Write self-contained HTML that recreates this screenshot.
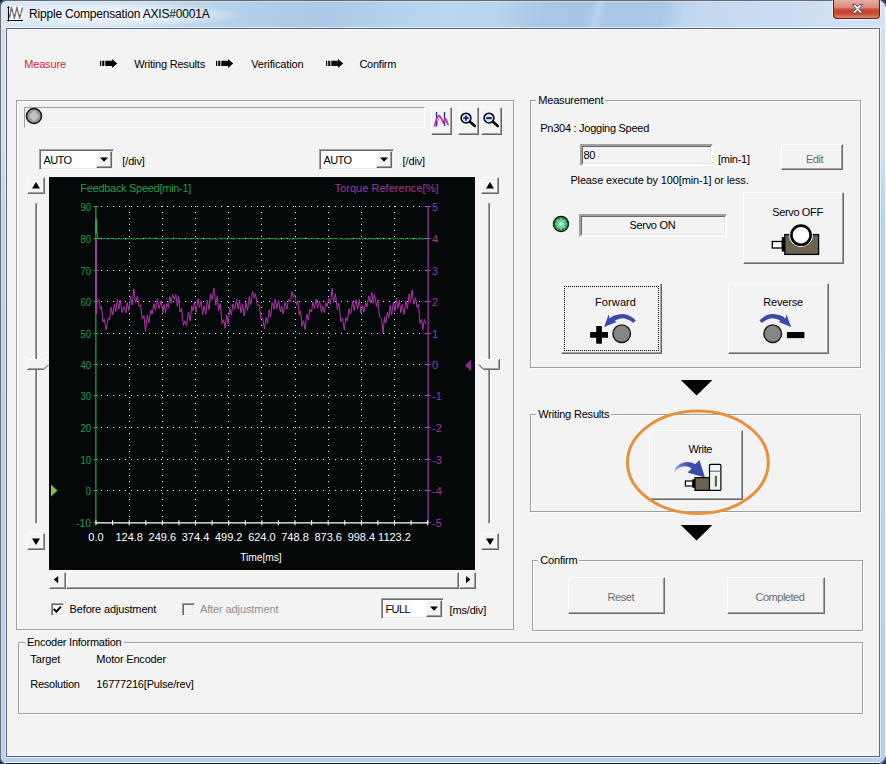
<!DOCTYPE html>
<html lang="en"><head><meta charset="utf-8"><title>Ripple Compensation AXIS#0001A</title>
<style>
html,body{margin:0;padding:0}
body{width:886px;height:764px;overflow:hidden;position:relative;background:#b4cfea;font-family:"Liberation Sans",Arial,sans-serif;font-size:11px}
*{box-sizing:border-box}
.abs,.t,.btn,.sunk,.grp,.gl,svg{position:absolute}
.t{white-space:pre;display:block}
.btn{background:#f3f3f3;border-top:1px solid #fff;border-left:1px solid #fff;border-right:1px solid #696969;border-bottom:1px solid #696969;box-shadow:inset -1px -1px 0 #a0a0a0}
.sunk{border-top:1px solid #a0a0a0;border-left:1px solid #a0a0a0;border-right:1px solid #fff;border-bottom:1px solid #fff;box-shadow:inset 1px 1px 0 #696969, inset -1px -1px 0 #e3e3e3}
.sunk1{box-shadow:none}
.sunk3{box-shadow:inset 1px 1px 0 #a0a0a0, inset -1px -1px 0 #fff, inset 2px 2px 0 #696969, inset -2px -2px 0 #e3e3e3}
.grp{border:1px solid #a0a0a0;box-shadow:1px 1px 0 #fff}
.grp i{position:absolute;left:0;top:0;right:-0px;bottom:0;border-top:1px solid #fff;border-left:1px solid #fff;display:block}
.gl{background:#f3f3f3}
#frame{left:0;top:0;width:886px;height:764px;background:linear-gradient(180deg,#cfe1f3 0px,#cde0f2 150px,#b8d4ed 215px,#b5d1eb 764px)}
#tbar{left:0;top:0;width:886px;height:29px;background:linear-gradient(105deg,#dbe8f5 0%,#d0e1f2 13.500%,#b5d0ea 26%,#adc9e7 37%,#b5d2ec 45%,#bad5ee 50%,#b8d3ec 56%,#a9c6e5 61.500%,#a8c5e4 66.300%,#b9d3ec 67.200%,#a9c6e5 68.200%,#abc8e6 74.500%,#bfd7ee 77%,#c9ddf1 86%,#d3e3f3 100%)}
#client{left:6px;top:28px;width:874px;height:729px;background:#f3f3f3;border:1px solid #5d6a7c}
</style></head><body>

<div class="abs" id="frame"></div>
<div class="abs" id="tbar"></div>
<div class="abs" style="left:10px;top:3px;width:230px;height:24px;background:radial-gradient(ellipse at 45% 50%,rgba(255,255,255,.75) 0%,rgba(255,255,255,.45) 45%,rgba(255,255,255,0) 75%)"></div>
<div class="abs" style="left:0;top:0;width:886px;height:1px;background:#6b6a6f"></div>
<div class="abs" style="left:0;top:1px;width:886px;height:1px;background:rgba(225,240,255,.45)"></div>
<div class="abs" style="left:0;top:0;width:1px;height:764px;background:#6f6e72"></div>
<div class="abs" style="left:1px;top:1px;width:1px;height:762px;background:rgba(215,238,255,.4)"></div>
<div class="abs" style="left:0;top:763px;width:886px;height:1px;background:#121925"></div>
<div class="abs" style="left:2px;top:762px;width:884px;height:1px;background:#f0f7fd"></div>
<div class="abs" style="left:885px;top:2px;width:1px;height:760px;background:#f0f7fd"></div>
<div class="abs" style="left:5px;top:27px;width:876px;height:731px;border:1px solid rgba(255,255,255,.55)"></div>
<div class="abs" id="client"></div>
<svg width="886" height="764" viewBox="0 0 886 764" style="left:0;top:0;pointer-events:none"><path d="M0 0h5L0 5zM886 0h-5l5 5zM0 764v-5l5 5zM886 764v-6l-6 6z" fill="#1a2740"/><path d="M0 6.500Q.8 .8 6.500 0M0 757.500Q.8 763.200 6.500 764" fill="none" stroke="#5f6878" stroke-width="1.600"/><path d="M879.500 0Q885.200 .8 886 6.500M886 757Q885 763 879 764" fill="none" stroke="#5f6878" stroke-width="1.600"/></svg>
<div class="abs" style="left:833px;top:0;width:47px;height:19px;border:1px solid #5a1f17;border-top:none;border-radius:0 0 4px 4px;background:linear-gradient(180deg,#e9aea4 0px,#e19a8e 4px,#dc8577 8px,#c94d36 9px,#c8452c 13px,#d76a55 16px,#e59483 19px);box-shadow:0 0 0 1px rgba(255,255,255,.5)">
<svg width="46" height="18" viewBox="0 0 46 18" style="left:-0.500px;top:0"><path d="M18.5 4.5h3.2l1.9 2.4 1.9-2.4h3.2l-3.5 4.2 3.7 4.4h-3.3l-2-2.6-2 2.6h-3.3l3.7-4.4z" fill="#fff" stroke="#4a5466" stroke-width="1" stroke-linejoin="round"/></svg></div>
<svg width="18" height="18" viewBox="-1 -1 18 18" style="left:6px;top:5px">
<rect x="0" y="0" width="16.200" height="16.200" fill="#fff"/>
<path d="M2.500 12.200L4.400 1.200L7.400 12.400L9.900 1.200L12.700 12.400L15.500 1.200" fill="none" stroke="#7e7e7e" stroke-width="1.500" stroke-linejoin="round"/>
<g fill="#4646c8"><rect x="2" y="8.700" width="1.100" height="1.200"/><rect x="4.200" y="3.800" width="1.400" height="1.100"/><rect x="6.900" y="8.800" width="1.200" height="1.200"/><rect x="9.300" y="3.800" width="1.400" height="1.100"/><rect x="12.200" y="8.800" width="1.400" height="1.200"/></g>
<g fill="#e8e04a"><rect x="2.100" y="7" width=".8" height="1"/><rect x="5.200" y="6" width=".8" height="1"/><rect x="8.100" y="4" width=".8" height="1"/><rect x="13" y="7" width=".8" height="1"/></g>
<rect x="14.900" y="2.600" width="1.200" height="1.800" fill="#5aa0e0"/>
<path d="M1.400 .8V15.600M.2 14.500H15" fill="none" stroke="#000" stroke-width="1.100"/>
<path d="M0 1.800L1.400 -.1L2.800 1.800zM14.400 13.200L16.300 14.500L14.400 15.800z" fill="#000"/>
</svg>
<span class="t " style="left:29.00px;top:6.44px;font-size:12px;line-height:16px;color:#000;letter-spacing:-0.188px;">Ripple Compensation AXIS#0001A</span>
<span class="t " style="left:24.20px;top:57.19px;font-size:11px;line-height:14px;color:#e0242c;letter-spacing:-0.157px;">Measure</span>
<span class="t " style="left:134.20px;top:57.19px;font-size:11px;line-height:14px;color:#000;letter-spacing:-0.198px;">Writing Results</span>
<span class="t " style="left:251.20px;top:57.19px;font-size:11px;line-height:14px;color:#000;letter-spacing:-0.126px;">Verification</span>
<span class="t " style="left:359.40px;top:57.19px;font-size:11px;line-height:14px;color:#000;letter-spacing:-0.244px;">Confirm</span>
<svg width="19" height="12" viewBox="0 0 19 12" style="left:99.8px;top:58px"><path d="M0 2.800h1.200v5.200h-1.200zM2.200 2.800h2.100v5.200h-2.100zM5.300 2.800h6.800v-1.900l5.100 4.500-5.100 4.500v-1.900h-6.800z" fill="#050505"/></svg>
<svg width="19" height="12" viewBox="0 0 19 12" style="left:215.6px;top:58px"><path d="M0 2.800h1.200v5.200h-1.200zM2.200 2.800h2.100v5.200h-2.100zM5.300 2.800h6.800v-1.900l5.100 4.500-5.100 4.500v-1.900h-6.800z" fill="#050505"/></svg>
<svg width="19" height="12" viewBox="0 0 19 12" style="left:325.6px;top:58px"><path d="M0 2.800h1.200v5.200h-1.200zM2.200 2.800h2.100v5.200h-2.100zM5.300 2.800h6.800v-1.900l5.100 4.500-5.100 4.500v-1.900h-6.800z" fill="#050505"/></svg>
<div class="grp" style="left:16px;top:100px;width:498px;height:530px"><i></i></div>
<div class="sunk sunk1" style="left:24px;top:107px;width:401px;height:21px;background:#f3f3f3"></div>
<svg width="18" height="18" viewBox="0 0 18 18" style="left:25px;top:107px"><circle cx="9" cy="9" r="7.500" fill="#9c9c9c" stroke="#111" stroke-width="1.500"/><path d="M9 3.800L14.200 9 9 14.200 3.800 9z" fill="#c4c4c4"/></svg>
<div class="btn " style="left:431px;top:107px;width:21px;height:28px"><svg width="19" height="26" viewBox="0 0 19 26" style="left:0;top:0"><path d="M3.300 18.600L4.500 14l1.200-3.500L7.200 7.600l1.400 1.200 1.400 3 1.500 3.300 1-2.700 1.100-1.700 1.200 2.800 1 3.400" stroke="#9a9a9a" stroke-width="1" fill="none" transform="translate(.9 .6)"/><path d="M4.500 4V18.500M12.500 4V18" stroke="#2b2b8f" stroke-width="1.300" fill="none"/><path d="M2.300 18.500L3.500 14.200l1.300-3.600L6.800 7.400l1.500 1.300 1.400 3 1.600 3.300 1-2.800 1.200-1.700 1.200 2.800 1 3.400" stroke="#c3379f" stroke-width="1.600" fill="none" stroke-linejoin="round"/></svg></div>
<div class="btn " style="left:458px;top:107px;width:21px;height:28px"><svg width="19" height="26" viewBox="0 0 19 26" style="left:0;top:0"><circle cx="7" cy="10.100" r="4.900" fill="#cfe9ef" stroke="#000" stroke-width="1.500"/><path d="M4.300 10.100h5.400M7 7.400v5.400" stroke="#1c1c8c" stroke-width="1.800"/><path d="M10.900 13.800l4.900 4.200" stroke="#000" stroke-width="2.600" stroke-linecap="round"/></svg></div>
<div class="btn " style="left:481px;top:107px;width:21px;height:28px"><svg width="19" height="26" viewBox="0 0 19 26" style="left:0;top:0"><circle cx="7" cy="10.100" r="4.900" fill="#cfe9ef" stroke="#000" stroke-width="1.500"/><path d="M4.200 10.100h5.600" stroke="#1c1c8c" stroke-width="2"/><path d="M10.900 13.800l4.900 4.200" stroke="#000" stroke-width="2.600" stroke-linecap="round"/></svg></div>
<div class="sunk " style="left:39px;top:149px;width:75px;height:21px;background:#fff"></div>
<span class="t " style="left:43.50px;top:153.19px;font-size:11px;line-height:14px;color:#000;letter-spacing:-0.615px;">AUTO</span>
<div class="btn " style="left:96px;top:151px;width:16px;height:17px"><svg width="14" height="15" viewBox="0 0 14 15" style="left:0;top:0"><path d="M3 5.500h8l-4 4.300z" fill="#000"/></svg></div>
<span class="t " style="left:122.30px;top:154.39px;font-size:11px;line-height:14px;color:#000;letter-spacing:-0.138px;">[/div]</span>
<div class="sunk " style="left:319px;top:149px;width:75px;height:21px;background:#fff"></div>
<span class="t " style="left:323.50px;top:153.19px;font-size:11px;line-height:14px;color:#000;letter-spacing:-0.615px;">AUTO</span>
<div class="btn " style="left:376px;top:151px;width:16px;height:17px"><svg width="14" height="15" viewBox="0 0 14 15" style="left:0;top:0"><path d="M3 5.500h8l-4 4.300z" fill="#000"/></svg></div>
<span class="t " style="left:402.60px;top:154.39px;font-size:11px;line-height:14px;color:#000;letter-spacing:-0.138px;">[/div]</span>
<div class="btn " style="left:27px;top:177px;width:18px;height:17px"><svg width="16" height="15" viewBox="0 0 16 15" style="left:0;top:0"><path d="M4 10.500h8l-4-6.500z" fill="#000"/></svg></div>
<div class="btn " style="left:27px;top:533px;width:18px;height:17px"><svg width="16" height="15" viewBox="0 0 16 15" style="left:0;top:0"><path d="M4 4.500h8l-4 6.500z" fill="#000"/></svg></div>
<div class="abs" style="left:35px;top:203px;width:3px;height:321px;border-left:1px solid #a0a0a0;border-top:1px solid #a0a0a0;border-right:1px solid #fff;border-bottom:1px solid #fff;background:#696969"></div>
<div class="btn " style="left:481px;top:177px;width:18px;height:17px"><svg width="16" height="15" viewBox="0 0 16 15" style="left:0;top:0"><path d="M4 10.500h8l-4-6.500z" fill="#000"/></svg></div>
<div class="btn " style="left:481px;top:533px;width:18px;height:17px"><svg width="16" height="15" viewBox="0 0 16 15" style="left:0;top:0"><path d="M4 4.500h8l-4 6.500z" fill="#000"/></svg></div>
<div class="abs" style="left:488px;top:203px;width:3px;height:321px;border-left:1px solid #a0a0a0;border-top:1px solid #a0a0a0;border-right:1px solid #fff;border-bottom:1px solid #fff;background:#696969"></div>
<svg width="24" height="12" viewBox="0 0 24 12" style="left:27px;top:359px"><path d="M0 0h17l5 5.500-5 5.500h-17z" fill="#f3f3f3"/><path d="M.5 10.500V.5h16.500l5 5" fill="none" stroke="#fff"/><path d="M22 5.500l-5 5h-17" fill="none" stroke="#696969"/><path d="M20.800 5.700l-4.200 3.800h-15.600" fill="none" stroke="#a0a0a0"/></svg>
<svg width="24" height="12" viewBox="0 0 24 12" style="left:477px;top:359px"><path d="M23 0h-17l-5 5.500 5 5.500h17z" fill="#f3f3f3"/><path d="M1.300 5.500l5-5h16.200" fill="none" stroke="#fff"/><path d="M1.300 5.500l5 5h16.200v-10.500" fill="none" stroke="#696969"/><path d="M2.800 5.800l3.900 3.700h14.800v-8.500" fill="none" stroke="#a0a0a0"/></svg>
<svg width="426" height="393" viewBox="49 177 426 393" style="left:49px;top:177px;font-family:'Liberation Sans',Arial,sans-serif" shape-rendering="auto"><rect x="49" y="177" width="426" height="393" fill="#050808"/><path d="M101 206h1v1h-1zM107 206h1v1h-1zM113 206h1v1h-1zM119 206h1v1h-1zM125 206h1v1h-1zM131 206h1v1h-1zM137 206h1v1h-1zM143 206h1v1h-1zM149 206h1v1h-1zM155 206h1v1h-1zM161 206h1v1h-1zM167 206h1v1h-1zM173 206h1v1h-1zM179 206h1v1h-1zM185 206h1v1h-1zM191 206h1v1h-1zM197 206h1v1h-1zM203 206h1v1h-1zM209 206h1v1h-1zM215 206h1v1h-1zM221 206h1v1h-1zM227 206h1v1h-1zM233 206h1v1h-1zM239 206h1v1h-1zM245 206h1v1h-1zM251 206h1v1h-1zM257 206h1v1h-1zM263 206h1v1h-1zM269 206h1v1h-1zM275 206h1v1h-1zM281 206h1v1h-1zM287 206h1v1h-1zM293 206h1v1h-1zM299 206h1v1h-1zM305 206h1v1h-1zM311 206h1v1h-1zM317 206h1v1h-1zM323 206h1v1h-1zM329 206h1v1h-1zM335 206h1v1h-1zM341 206h1v1h-1zM347 206h1v1h-1zM353 206h1v1h-1zM359 206h1v1h-1zM365 206h1v1h-1zM371 206h1v1h-1zM377 206h1v1h-1zM383 206h1v1h-1zM389 206h1v1h-1zM395 206h1v1h-1zM401 206h1v1h-1zM407 206h1v1h-1zM413 206h1v1h-1zM419 206h1v1h-1zM425 206h1v1h-1zM101 238h1v1h-1zM107 238h1v1h-1zM113 238h1v1h-1zM119 238h1v1h-1zM125 238h1v1h-1zM131 238h1v1h-1zM137 238h1v1h-1zM143 238h1v1h-1zM149 238h1v1h-1zM155 238h1v1h-1zM161 238h1v1h-1zM167 238h1v1h-1zM173 238h1v1h-1zM179 238h1v1h-1zM185 238h1v1h-1zM191 238h1v1h-1zM197 238h1v1h-1zM203 238h1v1h-1zM209 238h1v1h-1zM215 238h1v1h-1zM221 238h1v1h-1zM227 238h1v1h-1zM233 238h1v1h-1zM239 238h1v1h-1zM245 238h1v1h-1zM251 238h1v1h-1zM257 238h1v1h-1zM263 238h1v1h-1zM269 238h1v1h-1zM275 238h1v1h-1zM281 238h1v1h-1zM287 238h1v1h-1zM293 238h1v1h-1zM299 238h1v1h-1zM305 238h1v1h-1zM311 238h1v1h-1zM317 238h1v1h-1zM323 238h1v1h-1zM329 238h1v1h-1zM335 238h1v1h-1zM341 238h1v1h-1zM347 238h1v1h-1zM353 238h1v1h-1zM359 238h1v1h-1zM365 238h1v1h-1zM371 238h1v1h-1zM377 238h1v1h-1zM383 238h1v1h-1zM389 238h1v1h-1zM395 238h1v1h-1zM401 238h1v1h-1zM407 238h1v1h-1zM413 238h1v1h-1zM419 238h1v1h-1zM425 238h1v1h-1zM101 270h1v1h-1zM107 270h1v1h-1zM113 270h1v1h-1zM119 270h1v1h-1zM125 270h1v1h-1zM131 270h1v1h-1zM137 270h1v1h-1zM143 270h1v1h-1zM149 270h1v1h-1zM155 270h1v1h-1zM161 270h1v1h-1zM167 270h1v1h-1zM173 270h1v1h-1zM179 270h1v1h-1zM185 270h1v1h-1zM191 270h1v1h-1zM197 270h1v1h-1zM203 270h1v1h-1zM209 270h1v1h-1zM215 270h1v1h-1zM221 270h1v1h-1zM227 270h1v1h-1zM233 270h1v1h-1zM239 270h1v1h-1zM245 270h1v1h-1zM251 270h1v1h-1zM257 270h1v1h-1zM263 270h1v1h-1zM269 270h1v1h-1zM275 270h1v1h-1zM281 270h1v1h-1zM287 270h1v1h-1zM293 270h1v1h-1zM299 270h1v1h-1zM305 270h1v1h-1zM311 270h1v1h-1zM317 270h1v1h-1zM323 270h1v1h-1zM329 270h1v1h-1zM335 270h1v1h-1zM341 270h1v1h-1zM347 270h1v1h-1zM353 270h1v1h-1zM359 270h1v1h-1zM365 270h1v1h-1zM371 270h1v1h-1zM377 270h1v1h-1zM383 270h1v1h-1zM389 270h1v1h-1zM395 270h1v1h-1zM401 270h1v1h-1zM407 270h1v1h-1zM413 270h1v1h-1zM419 270h1v1h-1zM425 270h1v1h-1zM101 301h1v1h-1zM107 301h1v1h-1zM113 301h1v1h-1zM119 301h1v1h-1zM125 301h1v1h-1zM131 301h1v1h-1zM137 301h1v1h-1zM143 301h1v1h-1zM149 301h1v1h-1zM155 301h1v1h-1zM161 301h1v1h-1zM167 301h1v1h-1zM173 301h1v1h-1zM179 301h1v1h-1zM185 301h1v1h-1zM191 301h1v1h-1zM197 301h1v1h-1zM203 301h1v1h-1zM209 301h1v1h-1zM215 301h1v1h-1zM221 301h1v1h-1zM227 301h1v1h-1zM233 301h1v1h-1zM239 301h1v1h-1zM245 301h1v1h-1zM251 301h1v1h-1zM257 301h1v1h-1zM263 301h1v1h-1zM269 301h1v1h-1zM275 301h1v1h-1zM281 301h1v1h-1zM287 301h1v1h-1zM293 301h1v1h-1zM299 301h1v1h-1zM305 301h1v1h-1zM311 301h1v1h-1zM317 301h1v1h-1zM323 301h1v1h-1zM329 301h1v1h-1zM335 301h1v1h-1zM341 301h1v1h-1zM347 301h1v1h-1zM353 301h1v1h-1zM359 301h1v1h-1zM365 301h1v1h-1zM371 301h1v1h-1zM377 301h1v1h-1zM383 301h1v1h-1zM389 301h1v1h-1zM395 301h1v1h-1zM401 301h1v1h-1zM407 301h1v1h-1zM413 301h1v1h-1zM419 301h1v1h-1zM425 301h1v1h-1zM101 333h1v1h-1zM107 333h1v1h-1zM113 333h1v1h-1zM119 333h1v1h-1zM125 333h1v1h-1zM131 333h1v1h-1zM137 333h1v1h-1zM143 333h1v1h-1zM149 333h1v1h-1zM155 333h1v1h-1zM161 333h1v1h-1zM167 333h1v1h-1zM173 333h1v1h-1zM179 333h1v1h-1zM185 333h1v1h-1zM191 333h1v1h-1zM197 333h1v1h-1zM203 333h1v1h-1zM209 333h1v1h-1zM215 333h1v1h-1zM221 333h1v1h-1zM227 333h1v1h-1zM233 333h1v1h-1zM239 333h1v1h-1zM245 333h1v1h-1zM251 333h1v1h-1zM257 333h1v1h-1zM263 333h1v1h-1zM269 333h1v1h-1zM275 333h1v1h-1zM281 333h1v1h-1zM287 333h1v1h-1zM293 333h1v1h-1zM299 333h1v1h-1zM305 333h1v1h-1zM311 333h1v1h-1zM317 333h1v1h-1zM323 333h1v1h-1zM329 333h1v1h-1zM335 333h1v1h-1zM341 333h1v1h-1zM347 333h1v1h-1zM353 333h1v1h-1zM359 333h1v1h-1zM365 333h1v1h-1zM371 333h1v1h-1zM377 333h1v1h-1zM383 333h1v1h-1zM389 333h1v1h-1zM395 333h1v1h-1zM401 333h1v1h-1zM407 333h1v1h-1zM413 333h1v1h-1zM419 333h1v1h-1zM425 333h1v1h-1zM101 364h1v1h-1zM107 364h1v1h-1zM113 364h1v1h-1zM119 364h1v1h-1zM125 364h1v1h-1zM131 364h1v1h-1zM137 364h1v1h-1zM143 364h1v1h-1zM149 364h1v1h-1zM155 364h1v1h-1zM161 364h1v1h-1zM167 364h1v1h-1zM173 364h1v1h-1zM179 364h1v1h-1zM185 364h1v1h-1zM191 364h1v1h-1zM197 364h1v1h-1zM203 364h1v1h-1zM209 364h1v1h-1zM215 364h1v1h-1zM221 364h1v1h-1zM227 364h1v1h-1zM233 364h1v1h-1zM239 364h1v1h-1zM245 364h1v1h-1zM251 364h1v1h-1zM257 364h1v1h-1zM263 364h1v1h-1zM269 364h1v1h-1zM275 364h1v1h-1zM281 364h1v1h-1zM287 364h1v1h-1zM293 364h1v1h-1zM299 364h1v1h-1zM305 364h1v1h-1zM311 364h1v1h-1zM317 364h1v1h-1zM323 364h1v1h-1zM329 364h1v1h-1zM335 364h1v1h-1zM341 364h1v1h-1zM347 364h1v1h-1zM353 364h1v1h-1zM359 364h1v1h-1zM365 364h1v1h-1zM371 364h1v1h-1zM377 364h1v1h-1zM383 364h1v1h-1zM389 364h1v1h-1zM395 364h1v1h-1zM401 364h1v1h-1zM407 364h1v1h-1zM413 364h1v1h-1zM419 364h1v1h-1zM425 364h1v1h-1zM101 395h1v1h-1zM107 395h1v1h-1zM113 395h1v1h-1zM119 395h1v1h-1zM125 395h1v1h-1zM131 395h1v1h-1zM137 395h1v1h-1zM143 395h1v1h-1zM149 395h1v1h-1zM155 395h1v1h-1zM161 395h1v1h-1zM167 395h1v1h-1zM173 395h1v1h-1zM179 395h1v1h-1zM185 395h1v1h-1zM191 395h1v1h-1zM197 395h1v1h-1zM203 395h1v1h-1zM209 395h1v1h-1zM215 395h1v1h-1zM221 395h1v1h-1zM227 395h1v1h-1zM233 395h1v1h-1zM239 395h1v1h-1zM245 395h1v1h-1zM251 395h1v1h-1zM257 395h1v1h-1zM263 395h1v1h-1zM269 395h1v1h-1zM275 395h1v1h-1zM281 395h1v1h-1zM287 395h1v1h-1zM293 395h1v1h-1zM299 395h1v1h-1zM305 395h1v1h-1zM311 395h1v1h-1zM317 395h1v1h-1zM323 395h1v1h-1zM329 395h1v1h-1zM335 395h1v1h-1zM341 395h1v1h-1zM347 395h1v1h-1zM353 395h1v1h-1zM359 395h1v1h-1zM365 395h1v1h-1zM371 395h1v1h-1zM377 395h1v1h-1zM383 395h1v1h-1zM389 395h1v1h-1zM395 395h1v1h-1zM401 395h1v1h-1zM407 395h1v1h-1zM413 395h1v1h-1zM419 395h1v1h-1zM425 395h1v1h-1zM101 427h1v1h-1zM107 427h1v1h-1zM113 427h1v1h-1zM119 427h1v1h-1zM125 427h1v1h-1zM131 427h1v1h-1zM137 427h1v1h-1zM143 427h1v1h-1zM149 427h1v1h-1zM155 427h1v1h-1zM161 427h1v1h-1zM167 427h1v1h-1zM173 427h1v1h-1zM179 427h1v1h-1zM185 427h1v1h-1zM191 427h1v1h-1zM197 427h1v1h-1zM203 427h1v1h-1zM209 427h1v1h-1zM215 427h1v1h-1zM221 427h1v1h-1zM227 427h1v1h-1zM233 427h1v1h-1zM239 427h1v1h-1zM245 427h1v1h-1zM251 427h1v1h-1zM257 427h1v1h-1zM263 427h1v1h-1zM269 427h1v1h-1zM275 427h1v1h-1zM281 427h1v1h-1zM287 427h1v1h-1zM293 427h1v1h-1zM299 427h1v1h-1zM305 427h1v1h-1zM311 427h1v1h-1zM317 427h1v1h-1zM323 427h1v1h-1zM329 427h1v1h-1zM335 427h1v1h-1zM341 427h1v1h-1zM347 427h1v1h-1zM353 427h1v1h-1zM359 427h1v1h-1zM365 427h1v1h-1zM371 427h1v1h-1zM377 427h1v1h-1zM383 427h1v1h-1zM389 427h1v1h-1zM395 427h1v1h-1zM401 427h1v1h-1zM407 427h1v1h-1zM413 427h1v1h-1zM419 427h1v1h-1zM425 427h1v1h-1zM101 459h1v1h-1zM107 459h1v1h-1zM113 459h1v1h-1zM119 459h1v1h-1zM125 459h1v1h-1zM131 459h1v1h-1zM137 459h1v1h-1zM143 459h1v1h-1zM149 459h1v1h-1zM155 459h1v1h-1zM161 459h1v1h-1zM167 459h1v1h-1zM173 459h1v1h-1zM179 459h1v1h-1zM185 459h1v1h-1zM191 459h1v1h-1zM197 459h1v1h-1zM203 459h1v1h-1zM209 459h1v1h-1zM215 459h1v1h-1zM221 459h1v1h-1zM227 459h1v1h-1zM233 459h1v1h-1zM239 459h1v1h-1zM245 459h1v1h-1zM251 459h1v1h-1zM257 459h1v1h-1zM263 459h1v1h-1zM269 459h1v1h-1zM275 459h1v1h-1zM281 459h1v1h-1zM287 459h1v1h-1zM293 459h1v1h-1zM299 459h1v1h-1zM305 459h1v1h-1zM311 459h1v1h-1zM317 459h1v1h-1zM323 459h1v1h-1zM329 459h1v1h-1zM335 459h1v1h-1zM341 459h1v1h-1zM347 459h1v1h-1zM353 459h1v1h-1zM359 459h1v1h-1zM365 459h1v1h-1zM371 459h1v1h-1zM377 459h1v1h-1zM383 459h1v1h-1zM389 459h1v1h-1zM395 459h1v1h-1zM401 459h1v1h-1zM407 459h1v1h-1zM413 459h1v1h-1zM419 459h1v1h-1zM425 459h1v1h-1zM101 490h1v1h-1zM107 490h1v1h-1zM113 490h1v1h-1zM119 490h1v1h-1zM125 490h1v1h-1zM131 490h1v1h-1zM137 490h1v1h-1zM143 490h1v1h-1zM149 490h1v1h-1zM155 490h1v1h-1zM161 490h1v1h-1zM167 490h1v1h-1zM173 490h1v1h-1zM179 490h1v1h-1zM185 490h1v1h-1zM191 490h1v1h-1zM197 490h1v1h-1zM203 490h1v1h-1zM209 490h1v1h-1zM215 490h1v1h-1zM221 490h1v1h-1zM227 490h1v1h-1zM233 490h1v1h-1zM239 490h1v1h-1zM245 490h1v1h-1zM251 490h1v1h-1zM257 490h1v1h-1zM263 490h1v1h-1zM269 490h1v1h-1zM275 490h1v1h-1zM281 490h1v1h-1zM287 490h1v1h-1zM293 490h1v1h-1zM299 490h1v1h-1zM305 490h1v1h-1zM311 490h1v1h-1zM317 490h1v1h-1zM323 490h1v1h-1zM329 490h1v1h-1zM335 490h1v1h-1zM341 490h1v1h-1zM347 490h1v1h-1zM353 490h1v1h-1zM359 490h1v1h-1zM365 490h1v1h-1zM371 490h1v1h-1zM377 490h1v1h-1zM383 490h1v1h-1zM389 490h1v1h-1zM395 490h1v1h-1zM401 490h1v1h-1zM407 490h1v1h-1zM413 490h1v1h-1zM419 490h1v1h-1zM425 490h1v1h-1zM129 206h1v1h-1zM129 212h1v1h-1zM129 218h1v1h-1zM129 224h1v1h-1zM129 230h1v1h-1zM129 236h1v1h-1zM129 242h1v1h-1zM129 248h1v1h-1zM129 254h1v1h-1zM129 260h1v1h-1zM129 266h1v1h-1zM129 272h1v1h-1zM129 278h1v1h-1zM129 284h1v1h-1zM129 290h1v1h-1zM129 296h1v1h-1zM129 302h1v1h-1zM129 307h1v1h-1zM129 313h1v1h-1zM129 319h1v1h-1zM129 325h1v1h-1zM129 331h1v1h-1zM129 337h1v1h-1zM129 343h1v1h-1zM129 349h1v1h-1zM129 355h1v1h-1zM129 361h1v1h-1zM129 367h1v1h-1zM129 373h1v1h-1zM129 379h1v1h-1zM129 385h1v1h-1zM129 391h1v1h-1zM129 397h1v1h-1zM129 403h1v1h-1zM129 409h1v1h-1zM129 415h1v1h-1zM129 421h1v1h-1zM129 427h1v1h-1zM129 433h1v1h-1zM129 439h1v1h-1zM129 445h1v1h-1zM129 451h1v1h-1zM129 457h1v1h-1zM129 463h1v1h-1zM129 469h1v1h-1zM129 475h1v1h-1zM129 481h1v1h-1zM129 487h1v1h-1zM129 493h1v1h-1zM129 499h1v1h-1zM129 505h1v1h-1zM129 510h1v1h-1zM129 516h1v1h-1zM162 206h1v1h-1zM162 212h1v1h-1zM162 218h1v1h-1zM162 224h1v1h-1zM162 230h1v1h-1zM162 236h1v1h-1zM162 242h1v1h-1zM162 248h1v1h-1zM162 254h1v1h-1zM162 260h1v1h-1zM162 266h1v1h-1zM162 272h1v1h-1zM162 278h1v1h-1zM162 284h1v1h-1zM162 290h1v1h-1zM162 296h1v1h-1zM162 302h1v1h-1zM162 307h1v1h-1zM162 313h1v1h-1zM162 319h1v1h-1zM162 325h1v1h-1zM162 331h1v1h-1zM162 337h1v1h-1zM162 343h1v1h-1zM162 349h1v1h-1zM162 355h1v1h-1zM162 361h1v1h-1zM162 367h1v1h-1zM162 373h1v1h-1zM162 379h1v1h-1zM162 385h1v1h-1zM162 391h1v1h-1zM162 397h1v1h-1zM162 403h1v1h-1zM162 409h1v1h-1zM162 415h1v1h-1zM162 421h1v1h-1zM162 427h1v1h-1zM162 433h1v1h-1zM162 439h1v1h-1zM162 445h1v1h-1zM162 451h1v1h-1zM162 457h1v1h-1zM162 463h1v1h-1zM162 469h1v1h-1zM162 475h1v1h-1zM162 481h1v1h-1zM162 487h1v1h-1zM162 493h1v1h-1zM162 499h1v1h-1zM162 505h1v1h-1zM162 510h1v1h-1zM162 516h1v1h-1zM195 206h1v1h-1zM195 212h1v1h-1zM195 218h1v1h-1zM195 224h1v1h-1zM195 230h1v1h-1zM195 236h1v1h-1zM195 242h1v1h-1zM195 248h1v1h-1zM195 254h1v1h-1zM195 260h1v1h-1zM195 266h1v1h-1zM195 272h1v1h-1zM195 278h1v1h-1zM195 284h1v1h-1zM195 290h1v1h-1zM195 296h1v1h-1zM195 302h1v1h-1zM195 307h1v1h-1zM195 313h1v1h-1zM195 319h1v1h-1zM195 325h1v1h-1zM195 331h1v1h-1zM195 337h1v1h-1zM195 343h1v1h-1zM195 349h1v1h-1zM195 355h1v1h-1zM195 361h1v1h-1zM195 367h1v1h-1zM195 373h1v1h-1zM195 379h1v1h-1zM195 385h1v1h-1zM195 391h1v1h-1zM195 397h1v1h-1zM195 403h1v1h-1zM195 409h1v1h-1zM195 415h1v1h-1zM195 421h1v1h-1zM195 427h1v1h-1zM195 433h1v1h-1zM195 439h1v1h-1zM195 445h1v1h-1zM195 451h1v1h-1zM195 457h1v1h-1zM195 463h1v1h-1zM195 469h1v1h-1zM195 475h1v1h-1zM195 481h1v1h-1zM195 487h1v1h-1zM195 493h1v1h-1zM195 499h1v1h-1zM195 505h1v1h-1zM195 510h1v1h-1zM195 516h1v1h-1zM228 206h1v1h-1zM228 212h1v1h-1zM228 218h1v1h-1zM228 224h1v1h-1zM228 230h1v1h-1zM228 236h1v1h-1zM228 242h1v1h-1zM228 248h1v1h-1zM228 254h1v1h-1zM228 260h1v1h-1zM228 266h1v1h-1zM228 272h1v1h-1zM228 278h1v1h-1zM228 284h1v1h-1zM228 290h1v1h-1zM228 296h1v1h-1zM228 302h1v1h-1zM228 307h1v1h-1zM228 313h1v1h-1zM228 319h1v1h-1zM228 325h1v1h-1zM228 331h1v1h-1zM228 337h1v1h-1zM228 343h1v1h-1zM228 349h1v1h-1zM228 355h1v1h-1zM228 361h1v1h-1zM228 367h1v1h-1zM228 373h1v1h-1zM228 379h1v1h-1zM228 385h1v1h-1zM228 391h1v1h-1zM228 397h1v1h-1zM228 403h1v1h-1zM228 409h1v1h-1zM228 415h1v1h-1zM228 421h1v1h-1zM228 427h1v1h-1zM228 433h1v1h-1zM228 439h1v1h-1zM228 445h1v1h-1zM228 451h1v1h-1zM228 457h1v1h-1zM228 463h1v1h-1zM228 469h1v1h-1zM228 475h1v1h-1zM228 481h1v1h-1zM228 487h1v1h-1zM228 493h1v1h-1zM228 499h1v1h-1zM228 505h1v1h-1zM228 510h1v1h-1zM228 516h1v1h-1zM261 206h1v1h-1zM261 212h1v1h-1zM261 218h1v1h-1zM261 224h1v1h-1zM261 230h1v1h-1zM261 236h1v1h-1zM261 242h1v1h-1zM261 248h1v1h-1zM261 254h1v1h-1zM261 260h1v1h-1zM261 266h1v1h-1zM261 272h1v1h-1zM261 278h1v1h-1zM261 284h1v1h-1zM261 290h1v1h-1zM261 296h1v1h-1zM261 302h1v1h-1zM261 307h1v1h-1zM261 313h1v1h-1zM261 319h1v1h-1zM261 325h1v1h-1zM261 331h1v1h-1zM261 337h1v1h-1zM261 343h1v1h-1zM261 349h1v1h-1zM261 355h1v1h-1zM261 361h1v1h-1zM261 367h1v1h-1zM261 373h1v1h-1zM261 379h1v1h-1zM261 385h1v1h-1zM261 391h1v1h-1zM261 397h1v1h-1zM261 403h1v1h-1zM261 409h1v1h-1zM261 415h1v1h-1zM261 421h1v1h-1zM261 427h1v1h-1zM261 433h1v1h-1zM261 439h1v1h-1zM261 445h1v1h-1zM261 451h1v1h-1zM261 457h1v1h-1zM261 463h1v1h-1zM261 469h1v1h-1zM261 475h1v1h-1zM261 481h1v1h-1zM261 487h1v1h-1zM261 493h1v1h-1zM261 499h1v1h-1zM261 505h1v1h-1zM261 510h1v1h-1zM261 516h1v1h-1zM295 206h1v1h-1zM295 212h1v1h-1zM295 218h1v1h-1zM295 224h1v1h-1zM295 230h1v1h-1zM295 236h1v1h-1zM295 242h1v1h-1zM295 248h1v1h-1zM295 254h1v1h-1zM295 260h1v1h-1zM295 266h1v1h-1zM295 272h1v1h-1zM295 278h1v1h-1zM295 284h1v1h-1zM295 290h1v1h-1zM295 296h1v1h-1zM295 302h1v1h-1zM295 307h1v1h-1zM295 313h1v1h-1zM295 319h1v1h-1zM295 325h1v1h-1zM295 331h1v1h-1zM295 337h1v1h-1zM295 343h1v1h-1zM295 349h1v1h-1zM295 355h1v1h-1zM295 361h1v1h-1zM295 367h1v1h-1zM295 373h1v1h-1zM295 379h1v1h-1zM295 385h1v1h-1zM295 391h1v1h-1zM295 397h1v1h-1zM295 403h1v1h-1zM295 409h1v1h-1zM295 415h1v1h-1zM295 421h1v1h-1zM295 427h1v1h-1zM295 433h1v1h-1zM295 439h1v1h-1zM295 445h1v1h-1zM295 451h1v1h-1zM295 457h1v1h-1zM295 463h1v1h-1zM295 469h1v1h-1zM295 475h1v1h-1zM295 481h1v1h-1zM295 487h1v1h-1zM295 493h1v1h-1zM295 499h1v1h-1zM295 505h1v1h-1zM295 510h1v1h-1zM295 516h1v1h-1zM328 206h1v1h-1zM328 212h1v1h-1zM328 218h1v1h-1zM328 224h1v1h-1zM328 230h1v1h-1zM328 236h1v1h-1zM328 242h1v1h-1zM328 248h1v1h-1zM328 254h1v1h-1zM328 260h1v1h-1zM328 266h1v1h-1zM328 272h1v1h-1zM328 278h1v1h-1zM328 284h1v1h-1zM328 290h1v1h-1zM328 296h1v1h-1zM328 302h1v1h-1zM328 307h1v1h-1zM328 313h1v1h-1zM328 319h1v1h-1zM328 325h1v1h-1zM328 331h1v1h-1zM328 337h1v1h-1zM328 343h1v1h-1zM328 349h1v1h-1zM328 355h1v1h-1zM328 361h1v1h-1zM328 367h1v1h-1zM328 373h1v1h-1zM328 379h1v1h-1zM328 385h1v1h-1zM328 391h1v1h-1zM328 397h1v1h-1zM328 403h1v1h-1zM328 409h1v1h-1zM328 415h1v1h-1zM328 421h1v1h-1zM328 427h1v1h-1zM328 433h1v1h-1zM328 439h1v1h-1zM328 445h1v1h-1zM328 451h1v1h-1zM328 457h1v1h-1zM328 463h1v1h-1zM328 469h1v1h-1zM328 475h1v1h-1zM328 481h1v1h-1zM328 487h1v1h-1zM328 493h1v1h-1zM328 499h1v1h-1zM328 505h1v1h-1zM328 510h1v1h-1zM328 516h1v1h-1zM361 206h1v1h-1zM361 212h1v1h-1zM361 218h1v1h-1zM361 224h1v1h-1zM361 230h1v1h-1zM361 236h1v1h-1zM361 242h1v1h-1zM361 248h1v1h-1zM361 254h1v1h-1zM361 260h1v1h-1zM361 266h1v1h-1zM361 272h1v1h-1zM361 278h1v1h-1zM361 284h1v1h-1zM361 290h1v1h-1zM361 296h1v1h-1zM361 302h1v1h-1zM361 307h1v1h-1zM361 313h1v1h-1zM361 319h1v1h-1zM361 325h1v1h-1zM361 331h1v1h-1zM361 337h1v1h-1zM361 343h1v1h-1zM361 349h1v1h-1zM361 355h1v1h-1zM361 361h1v1h-1zM361 367h1v1h-1zM361 373h1v1h-1zM361 379h1v1h-1zM361 385h1v1h-1zM361 391h1v1h-1zM361 397h1v1h-1zM361 403h1v1h-1zM361 409h1v1h-1zM361 415h1v1h-1zM361 421h1v1h-1zM361 427h1v1h-1zM361 433h1v1h-1zM361 439h1v1h-1zM361 445h1v1h-1zM361 451h1v1h-1zM361 457h1v1h-1zM361 463h1v1h-1zM361 469h1v1h-1zM361 475h1v1h-1zM361 481h1v1h-1zM361 487h1v1h-1zM361 493h1v1h-1zM361 499h1v1h-1zM361 505h1v1h-1zM361 510h1v1h-1zM361 516h1v1h-1zM394 206h1v1h-1zM394 212h1v1h-1zM394 218h1v1h-1zM394 224h1v1h-1zM394 230h1v1h-1zM394 236h1v1h-1zM394 242h1v1h-1zM394 248h1v1h-1zM394 254h1v1h-1zM394 260h1v1h-1zM394 266h1v1h-1zM394 272h1v1h-1zM394 278h1v1h-1zM394 284h1v1h-1zM394 290h1v1h-1zM394 296h1v1h-1zM394 302h1v1h-1zM394 307h1v1h-1zM394 313h1v1h-1zM394 319h1v1h-1zM394 325h1v1h-1zM394 331h1v1h-1zM394 337h1v1h-1zM394 343h1v1h-1zM394 349h1v1h-1zM394 355h1v1h-1zM394 361h1v1h-1zM394 367h1v1h-1zM394 373h1v1h-1zM394 379h1v1h-1zM394 385h1v1h-1zM394 391h1v1h-1zM394 397h1v1h-1zM394 403h1v1h-1zM394 409h1v1h-1zM394 415h1v1h-1zM394 421h1v1h-1zM394 427h1v1h-1zM394 433h1v1h-1zM394 439h1v1h-1zM394 445h1v1h-1zM394 451h1v1h-1zM394 457h1v1h-1zM394 463h1v1h-1zM394 469h1v1h-1zM394 475h1v1h-1zM394 481h1v1h-1zM394 487h1v1h-1zM394 493h1v1h-1zM394 499h1v1h-1zM394 505h1v1h-1zM394 510h1v1h-1zM394 516h1v1h-1z" fill="#f4f4f4" shape-rendering="crispEdges"/><path d="M95.85 206.0V522.5" stroke="#1f9e48" stroke-width="1.250" fill="none"/><path d="M428.09999999999997 206.0V522.5" stroke="#a732a6" stroke-width="1.250" fill="none"/><path d="M93.5 206.5h5" stroke="#1f9e48" stroke-width="1.100"/><path d="M425.59999999999997 206.5h5" stroke="#b234b0" stroke-width="1.100"/><path d="M93.5 238.5h5" stroke="#1f9e48" stroke-width="1.100"/><path d="M425.59999999999997 238.5h5" stroke="#b234b0" stroke-width="1.100"/><path d="M93.5 270.5h5" stroke="#1f9e48" stroke-width="1.100"/><path d="M425.59999999999997 270.5h5" stroke="#b234b0" stroke-width="1.100"/><path d="M93.5 301.5h5" stroke="#1f9e48" stroke-width="1.100"/><path d="M425.59999999999997 301.5h5" stroke="#b234b0" stroke-width="1.100"/><path d="M93.5 333.5h5" stroke="#1f9e48" stroke-width="1.100"/><path d="M425.59999999999997 333.5h5" stroke="#b234b0" stroke-width="1.100"/><path d="M93.5 364.5h5" stroke="#1f9e48" stroke-width="1.100"/><path d="M425.59999999999997 364.5h5" stroke="#b234b0" stroke-width="1.100"/><path d="M93.5 395.5h5" stroke="#1f9e48" stroke-width="1.100"/><path d="M425.59999999999997 395.5h5" stroke="#b234b0" stroke-width="1.100"/><path d="M93.5 427.5h5" stroke="#1f9e48" stroke-width="1.100"/><path d="M425.59999999999997 427.5h5" stroke="#b234b0" stroke-width="1.100"/><path d="M93.5 459.5h5" stroke="#1f9e48" stroke-width="1.100"/><path d="M425.59999999999997 459.5h5" stroke="#b234b0" stroke-width="1.100"/><path d="M93.5 490.5h5" stroke="#1f9e48" stroke-width="1.100"/><path d="M425.59999999999997 490.5h5" stroke="#b234b0" stroke-width="1.100"/><path d="M93.5 522.5h5" stroke="#1f9e48" stroke-width="1.100"/><path d="M425.59999999999997 522.5h5" stroke="#b234b0" stroke-width="1.100"/><path d="M95.5 522.9H428.2" stroke="#fff" stroke-width="1.300"/><path d="M96.0 520.3v5" stroke="#fff" stroke-width="1.100"/><path d="M112.6 520.3v5" stroke="#fff" stroke-width="1.100"/><path d="M129.2 520.3v5" stroke="#fff" stroke-width="1.100"/><path d="M145.8 520.3v5" stroke="#fff" stroke-width="1.100"/><path d="M162.3 520.3v5" stroke="#fff" stroke-width="1.100"/><path d="M178.9 520.3v5" stroke="#fff" stroke-width="1.100"/><path d="M195.5 520.3v5" stroke="#fff" stroke-width="1.100"/><path d="M212.1 520.3v5" stroke="#fff" stroke-width="1.100"/><path d="M228.7 520.3v5" stroke="#fff" stroke-width="1.100"/><path d="M245.3 520.3v5" stroke="#fff" stroke-width="1.100"/><path d="M261.9 520.3v5" stroke="#fff" stroke-width="1.100"/><path d="M278.4 520.3v5" stroke="#fff" stroke-width="1.100"/><path d="M295.0 520.3v5" stroke="#fff" stroke-width="1.100"/><path d="M311.6 520.3v5" stroke="#fff" stroke-width="1.100"/><path d="M328.2 520.3v5" stroke="#fff" stroke-width="1.100"/><path d="M344.8 520.3v5" stroke="#fff" stroke-width="1.100"/><path d="M361.4 520.3v5" stroke="#fff" stroke-width="1.100"/><path d="M377.9 520.3v5" stroke="#fff" stroke-width="1.100"/><path d="M394.5 520.3v5" stroke="#fff" stroke-width="1.100"/><path d="M411.1 520.3v5" stroke="#fff" stroke-width="1.100"/><path d="M427.7 520.3v5" stroke="#fff" stroke-width="1.100"/><path d="M96 239V314" stroke="#b234b0" stroke-width="1.500" fill="none"/><polyline fill="none" stroke="#ad34ad" stroke-width="1" stroke-linejoin="miter" points="96.0,239.0 96.0,279.0 96.3,314.0 97.0,302.1 98.7,299.2 100.3,308.9 101.5,306.3 102.9,321.9 104.2,319.3 106.2,329.9 108.1,318.4 109.6,319.8 111.1,307.3 112.8,315.1 114.4,304.2 115.8,311.5 117.3,299.4 118.8,309.3 120.2,299.9 122.1,312.5 124.1,306.5 125.9,313.0 127.2,302.6 128.8,310.7 130.6,296.5 132.2,305.1 133.8,288.8 135.6,302.6 137.4,296.1 139.1,306.1 140.5,304.9 142.3,318.9 143.9,315.6 145.5,331.4 147.3,315.1 148.9,322.8 150.8,310.0 152.2,314.0 153.9,303.4 155.5,310.4 157.4,298.6 159.1,308.6 161.0,301.0 162.9,312.7 164.2,304.3 165.5,312.7 167.0,303.6 168.4,307.7 169.7,296.6 171.1,303.3 172.6,294.1 174.5,299.8 175.9,294.6 177.3,306.2 178.6,296.6 180.0,312.0 181.6,308.6 183.4,325.5 184.8,320.8 186.6,326.0 188.4,312.1 190.3,320.6 191.7,305.9 193.0,310.9 194.4,302.2 196.0,312.5 198.0,298.6 199.4,307.6 201.1,301.0 202.7,314.6 204.0,305.8 205.8,314.3 207.2,300.1 209.1,309.7 210.6,293.8 212.0,299.7 213.9,288.2 215.8,305.3 217.3,295.7 218.6,310.6 220.2,303.6 222.1,323.6 223.5,319.7 225.2,328.4 226.6,315.1 228.2,323.8 229.7,308.1 231.4,314.9 232.9,304.0 234.8,309.5 236.5,299.1 238.2,309.0 239.5,299.9 241.0,313.0 242.7,304.1 244.2,315.9 245.9,302.4 247.5,310.6 249.3,296.5 250.7,304.8 252.6,291.5 254.2,298.3 255.5,293.5 257.4,305.7 259.1,304.5 261.0,319.4 262.6,317.7 264.5,328.9 266.1,317.5 267.6,323.5 269.2,309.7 270.7,316.7 272.1,302.5 274.0,309.3 275.3,299.0 276.7,308.8 278.5,300.2 280.4,312.1 281.7,306.0 283.3,314.1 285.0,302.2 286.9,309.1 288.5,299.1 290.4,302.2 292.0,291.4 293.4,297.5 294.9,294.6 296.4,305.1 297.9,300.7 299.2,314.7 300.6,310.8 301.9,326.2 303.5,320.7 305.2,329.6 306.7,314.1 308.4,320.1 309.7,309.2 311.5,312.1 312.8,302.0 314.6,309.0 316.0,299.0 317.6,308.2 319.6,300.9 321.5,312.3 322.8,306.0 324.4,312.7 325.7,302.8 327.2,306.5 328.7,298.4 330.4,304.4 332.1,288.3 333.6,302.4 335.4,293.6 337.3,309.8 339.0,303.2 340.7,321.8 342.5,318.2 344.4,330.0 345.8,317.7 347.4,321.1 349.0,308.8 350.8,313.7 352.6,301.7 354.2,310.3 356.0,299.4 357.5,309.2 359.3,299.6 360.8,313.1 362.6,305.5 363.9,312.3 365.7,302.7 367.0,306.8 368.7,295.8 370.2,302.7 371.8,292.2 373.2,303.5 374.5,294.6 376.5,306.5 377.9,299.3 379.5,316.6 381.5,318.7 383.1,333.1 384.5,316.8 385.8,322.8 387.4,312.2 388.9,317.7 390.2,305.1 391.6,315.0 393.5,302.1 395.0,311.4 396.5,298.5 397.8,308.4 399.3,299.8 400.8,312.8 402.3,304.5 404.1,314.5 406.0,300.8 407.4,308.7 409.2,293.8 410.5,302.7 412.1,290.1 413.8,304.3 415.6,297.6 417.1,307.5 418.5,304.2 420.0,323.7 421.5,319.4 422.9,329.5 424.3,319.3 426.2,324.2"/><path d="M96.100 219V233.500" stroke="#25a850" stroke-width="1.900" fill="none"/><polyline fill="none" stroke="#2aad54" stroke-width="0.950" points="96.6,218.5 96.9,232.0 97.8,237.5 98.8,239.3 100.0,238.2 101.2,239.1 102.3,238.4 103.8,238.9 105.1,238.1 106.7,239.0 107.8,238.4 109.1,239.1 110.6,238.0 112.2,238.8 113.2,238.1 114.7,239.1 116.1,238.6 117.3,239.5 118.8,238.0 120.4,239.0 121.5,238.5 122.8,239.3 124.3,238.1 125.7,239.4 127.0,238.2 128.0,239.4 129.2,237.9 130.5,239.0 131.6,238.4 133.0,239.3 134.1,238.5 135.4,239.2 136.6,238.4 138.0,238.8 139.2,238.3 140.7,239.3 142.3,238.3 143.4,239.0 145.0,238.1 146.2,238.8 147.5,238.1 148.7,239.0 150.1,237.9 151.3,238.8 152.5,238.3 153.9,239.0 155.3,238.1 156.6,239.0 158.2,238.4 159.7,239.0 160.9,238.0 162.0,239.5 163.3,238.5 164.5,239.1 165.9,237.9 166.9,239.1 168.1,237.9 169.2,238.8 170.2,238.3 171.7,239.4 173.2,237.9 174.7,239.0 175.8,237.9 177.3,238.8 178.7,238.3 179.9,239.0 181.0,238.6 182.2,239.1 183.8,238.5 185.3,239.0 186.6,238.0 188.0,239.1 189.1,238.3 190.3,239.5 191.4,238.3 193.0,238.8 194.2,238.0 195.7,238.8 196.7,238.5 198.2,239.0 199.7,237.9 200.9,239.0 202.5,238.1 203.6,239.3 204.8,238.4 205.8,239.4 207.4,238.1 208.9,238.8 210.1,238.3 211.6,239.5 212.9,238.4 214.1,239.2 215.7,238.5 217.2,239.3 218.7,238.0 220.0,239.0 221.2,238.3 222.7,238.9 223.8,238.1 225.0,238.9 226.0,238.2 227.2,239.5 228.7,237.9 229.9,238.9 230.9,238.2 232.3,239.1 233.5,238.3 234.9,239.3 236.3,238.0 237.7,238.9 239.2,238.4 240.5,239.1 242.0,238.4 243.1,239.0 244.2,238.0 245.6,239.0 246.8,237.9 248.1,239.0 249.6,238.1 251.2,238.9 252.5,238.0 254.0,239.5 255.0,238.4 256.1,238.9 257.7,238.2 259.2,239.1 260.7,238.3 261.9,239.4 263.5,238.5 264.8,239.3 266.0,238.3 267.0,239.0 268.2,238.2 269.6,239.0 270.6,238.4 272.0,238.9 273.2,238.4 274.7,239.2 275.7,238.5 276.9,239.2 278.3,238.5 279.4,239.3 280.7,238.4 281.8,239.5 283.0,238.2 284.3,239.1 285.8,237.9 287.0,239.0 288.4,238.4 289.4,239.5 290.7,238.0 291.9,239.4 293.2,238.5 294.2,239.2 295.6,237.9 296.6,239.3 297.9,238.2 299.0,239.0 300.3,237.9 301.3,239.2 302.8,237.9 303.9,238.9 305.5,237.9 306.8,238.8 308.3,238.3 309.9,239.3 311.4,238.5 312.9,239.0 314.1,238.0 315.6,238.9 316.7,238.3 318.0,239.1 319.1,238.4 320.5,239.5 321.6,238.2 323.0,238.8 324.5,238.5 325.9,239.2 327.3,238.4 328.5,239.2 329.8,238.1 331.0,239.1 332.1,238.1 333.4,239.0 334.8,238.0 336.1,238.9 337.4,238.5 338.4,239.1 339.5,238.3 340.8,238.8 342.2,238.5 343.6,239.4 344.9,238.6 346.2,239.1 347.8,238.5 349.3,239.5 350.8,238.0 351.9,239.5 353.2,237.9 354.7,238.9 356.2,237.9 357.2,239.1 358.7,238.5 360.2,239.0 361.7,238.5 363.0,239.5 364.1,238.4 365.4,239.0 366.5,238.5 367.6,239.5 369.0,237.9 370.1,239.4 371.1,238.2 372.5,239.1 374.0,238.2 375.4,239.4 376.5,237.9 377.8,239.1 379.3,238.4 380.9,239.2 382.1,238.0 383.4,238.9 384.8,238.6 386.3,239.0 387.7,237.9 389.1,239.3 390.3,238.6 391.3,238.9 392.6,238.3 393.9,239.5 395.0,238.4 396.4,238.8 397.4,238.3 398.5,239.1 399.6,238.2 401.0,239.0 402.3,238.3 403.4,239.5 404.6,238.5 405.6,239.3 407.2,238.0 408.4,239.0 409.4,238.1 410.7,239.1 412.1,238.3 413.7,239.3 414.8,237.9 415.9,239.2 417.1,238.4 418.1,239.4 419.2,238.2 420.7,238.9 421.8,238.2 423.1,239.3 424.6,238.5 425.8,239.0 426.8,238.0"/><text x="80.4" y="210.8" font-size="11" fill="#1f9e48" textLength="10.6" lengthAdjust="spacingAndGlyphs">90</text><text x="80.4" y="242.8" font-size="11" fill="#1f9e48" textLength="10.6" lengthAdjust="spacingAndGlyphs">80</text><text x="80.4" y="274.8" font-size="11" fill="#1f9e48" textLength="10.6" lengthAdjust="spacingAndGlyphs">70</text><text x="80.4" y="305.8" font-size="11" fill="#1f9e48" textLength="10.6" lengthAdjust="spacingAndGlyphs">60</text><text x="80.4" y="337.8" font-size="11" fill="#1f9e48" textLength="10.6" lengthAdjust="spacingAndGlyphs">50</text><text x="80.4" y="368.8" font-size="11" fill="#1f9e48" textLength="10.6" lengthAdjust="spacingAndGlyphs">40</text><text x="80.4" y="399.8" font-size="11" fill="#1f9e48" textLength="10.6" lengthAdjust="spacingAndGlyphs">30</text><text x="80.4" y="431.8" font-size="11" fill="#1f9e48" textLength="10.6" lengthAdjust="spacingAndGlyphs">20</text><text x="80.4" y="463.8" font-size="11" fill="#1f9e48" textLength="10.6" lengthAdjust="spacingAndGlyphs">10</text><text x="85.8" y="494.8" font-size="11" fill="#1f9e48" textLength="5.2" lengthAdjust="spacingAndGlyphs">0</text><text x="76.2" y="526.8" font-size="11" fill="#1f9e48" textLength="14.8" lengthAdjust="spacingAndGlyphs">-10</text><text x="432" y="210.8" font-size="11" fill="#9c379e">5</text><text x="432" y="242.8" font-size="11" fill="#9c379e">4</text><text x="432" y="274.8" font-size="11" fill="#9c379e">3</text><text x="432" y="305.8" font-size="11" fill="#9c379e">2</text><text x="432" y="337.8" font-size="11" fill="#9c379e">1</text><text x="432" y="368.8" font-size="11" fill="#9c379e">0</text><text x="432" y="399.8" font-size="11" fill="#9c379e">-1</text><text x="432" y="431.8" font-size="11" fill="#9c379e">-2</text><text x="432" y="463.8" font-size="11" fill="#9c379e">-3</text><text x="432" y="494.8" font-size="11" fill="#9c379e">-4</text><text x="432" y="526.8" font-size="11" fill="#9c379e">-5</text><text x="96.0" y="540.700" text-anchor="middle" font-size="11" fill="#fff">0.0</text><text x="129.2" y="540.700" text-anchor="middle" font-size="11" fill="#fff">124.8</text><text x="162.3" y="540.700" text-anchor="middle" font-size="11" fill="#fff">249.6</text><text x="195.5" y="540.700" text-anchor="middle" font-size="11" fill="#fff">374.4</text><text x="228.7" y="540.700" text-anchor="middle" font-size="11" fill="#fff">499.2</text><text x="261.9" y="540.700" text-anchor="middle" font-size="11" fill="#fff">624.0</text><text x="295.0" y="540.700" text-anchor="middle" font-size="11" fill="#fff">748.8</text><text x="328.2" y="540.700" text-anchor="middle" font-size="11" fill="#fff">873.6</text><text x="361.4" y="540.700" text-anchor="middle" font-size="11" fill="#fff">998.4</text><text x="394.5" y="540.700" text-anchor="middle" font-size="11" fill="#fff">1123.2</text><text x="240.200" y="560.500" font-size="11" fill="#fff" textLength="41.500" lengthAdjust="spacingAndGlyphs">Time[ms]</text><text x="80.300" y="191.600" font-size="11" fill="#1f9e48" textLength="111" lengthAdjust="spacing">Feedback Speed[min-1]</text><text x="334.500" y="191.600" font-size="11" fill="#9c379e" textLength="104" lengthAdjust="spacing">Torque Reference[%]</text><path d="M51 484.500l6.500 6-6.500 6z" fill="#7ac143"/><path d="M471.200 359.700l-6.300 5.700 6.300 5.700z" fill="#8f2b8f"/></svg>
<div class="btn " style="left:49px;top:572px;width:17px;height:17px"><svg width="15" height="15" viewBox="0 0 15 15" style="left:0;top:0"><path d="M8.200 3v7.200l-4.400-3.600z" fill="#000"/></svg></div>
<div class="btn " style="left:66px;top:572px;width:393px;height:17px"></div>
<div class="btn " style="left:459px;top:572px;width:17px;height:17px"><svg width="15" height="15" viewBox="0 0 15 15" style="left:0;top:0"><path d="M6 3v7.200l4.400-3.600z" fill="#000"/></svg></div>
<div class="sunk " style="left:51px;top:603px;width:13px;height:13px;background:#fff"><svg width="11" height="11" viewBox="0 0 11 11" style="left:0;top:0"><path d="M1.800 4.800L4.400 7.700L8.900 2.700" fill="none" stroke="#000" stroke-width="2"/></svg></div>
<span class="t " style="left:69.60px;top:602.19px;font-size:11px;line-height:14px;color:#000;letter-spacing:-0.157px;">Before adjustment</span>
<div class="sunk " style="left:182px;top:603px;width:13px;height:13px;background:#f3f3f3"></div>
<span class="t " style="left:199.90px;top:602.19px;font-size:11px;line-height:14px;color:#8e8e8e;letter-spacing:-0.100px;">After adjustment</span>
<div class="sunk " style="left:381px;top:598px;width:63px;height:21px;background:#fff"></div>
<span class="t " style="left:385.50px;top:602.19px;font-size:11px;line-height:14px;color:#000;letter-spacing:-0.600px;">FULL</span>
<div class="btn " style="left:426px;top:600px;width:16px;height:17px"><svg width="14" height="15" viewBox="0 0 14 15" style="left:0;top:0"><path d="M3 5.500h8l-4 4.300z" fill="#000"/></svg></div>
<span class="t " style="left:449.50px;top:602.79px;font-size:11px;line-height:14px;color:#000;letter-spacing:-0.162px;">[ms/div]</span>
<div class="grp" style="left:530px;top:100px;width:331px;height:268px"><i></i></div>
<div class="gl" style="left:536.3px;top:94px;width:69px;height:14px"></div>
<span class="t " style="left:538.30px;top:93.19px;font-size:11px;line-height:14px;color:#000;letter-spacing:-0.205px;">Measurement</span>
<span class="t " style="left:540.30px;top:120.99px;font-size:11px;line-height:14px;color:#000;letter-spacing:-0.270px;">Pn304 : Jogging Speed</span>
<div class="sunk sunk3" style="left:580px;top:144px;width:133px;height:22px;background:#f3f3f3"></div>
<span class="t " style="left:583.40px;top:147.79px;font-size:11px;line-height:14px;color:#000;letter-spacing:-0.218px;">80</span>
<span class="t " style="left:718.00px;top:151.59px;font-size:11px;line-height:14px;color:#000;letter-spacing:-0.274px;">[min-1]</span>
<div class="btn " style="left:781px;top:144px;width:62px;height:26px"></div>
<span class="t " style="left:806.00px;top:152.09px;font-size:11px;line-height:14px;color:#6d6d6d;letter-spacing:-0.489px;">Edit</span>
<span class="t " style="left:570.40px;top:172.79px;font-size:11px;line-height:14px;color:#000;letter-spacing:-0.141px;">Please execute by 100[min-1] or less.</span>
<svg width="18" height="18" viewBox="0 0 18 18" style="left:552.100px;top:214.850px"><circle cx="9" cy="9" r="8.150" fill="#070b08"/><circle cx="9" cy="9" r="6.900" fill="#1b9550"/><circle cx="13.40" cy="9.00" r="1.450" fill="#6fd864"/><circle cx="12.11" cy="12.11" r="1.450" fill="#6fd864"/><circle cx="9.00" cy="13.40" r="1.450" fill="#6fd864"/><circle cx="5.89" cy="12.11" r="1.450" fill="#6fd864"/><circle cx="4.60" cy="9.00" r="1.450" fill="#6fd864"/><circle cx="5.89" cy="5.89" r="1.450" fill="#6fd864"/><circle cx="9.00" cy="4.60" r="1.450" fill="#6fd864"/><circle cx="12.11" cy="5.89" r="1.450" fill="#6fd864"/><circle cx="9" cy="9" r="3.400" fill="#4cc25e" opacity=".7"/><circle cx="11.49" cy="10.03" r="1" fill="#8fdde6"/><circle cx="10.03" cy="11.49" r="1" fill="#8fdde6"/><circle cx="7.97" cy="11.49" r="1" fill="#8fdde6"/><circle cx="6.51" cy="10.03" r="1" fill="#8fdde6"/><circle cx="6.51" cy="7.97" r="1" fill="#8fdde6"/><circle cx="7.97" cy="6.51" r="1" fill="#8fdde6"/><circle cx="10.03" cy="6.51" r="1" fill="#8fdde6"/><circle cx="11.49" cy="7.97" r="1" fill="#8fdde6"/><circle cx="9" cy="9" r="1.700" fill="#fff"/></svg>
<div class="sunk sunk3" style="left:579px;top:214px;width:148px;height:23px;background:#f3f3f3"></div>
<span class="t " style="left:629.40px;top:218.19px;font-size:11px;line-height:14px;color:#000;letter-spacing:-0.287px;">Servo ON</span>
<div class="btn " style="left:743px;top:192px;width:101px;height:72px"></div>
<span class="t " style="left:772.20px;top:204.79px;font-size:11px;line-height:14px;color:#000;letter-spacing:-0.354px;">Servo OFF</span>
<svg width="52" height="34" viewBox="770 224 52 34" style="left:770px;top:224px">
<rect x="772.300" y="241.500" width="10" height="6.500" fill="#fff" stroke="#000" stroke-width="1.300"/>
<rect x="781.800" y="237.200" width="3" height="14.400" fill="#000"/>
<rect x="784.800" y="234.600" width="33.800" height="19.800" fill="#6b6350" stroke="#000" stroke-width="1.300"/>
<circle cx="801" cy="235.200" r="11.800" fill="#f3f3f3"/>
<circle cx="801" cy="235.200" r="9.600" fill="#fff" stroke="#000" stroke-width="2.600"/>
</svg>
<div class="btn " style="left:561px;top:283px;width:101px;height:71px"><div class="abs" style="left:2px;top:2px;right:2px;bottom:2px;border:1px dotted #000"></div></div>
<span class="t " style="left:595.00px;top:294.99px;font-size:11px;line-height:14px;color:#000;letter-spacing:0.108px;">Forward</span>
<svg width="60" height="40" viewBox="585 310 60 40" style="left:585px;top:310px">
<path d="M590.100 332h6.100v-5.900h5.700v5.900h6.100v5.800h-6.100v5.900h-5.700v-5.900h-6.100z" fill="#050505"/>
<circle cx="621.700" cy="333.700" r="8.800" fill="#868686" stroke="#141414" stroke-width="1.400"/>
<path d="M635.800 320.500Q629 313.600 622 314Q614.500 314.400 609.600 318.400L608.700 314.200L604.100 327L616.500 321.900L614.600 320.700Q618.500 318.100 623 318.200Q628.500 318.600 633.100 323Z" fill="#3a4ba8"/>
</svg>
<div class="btn " style="left:728px;top:283px;width:101px;height:71px"></div>
<span class="t " style="left:763.20px;top:294.99px;font-size:11px;line-height:14px;color:#000;letter-spacing:-0.166px;">Reverse</span>
<svg width="60" height="40" viewBox="752 310 60 40" style="left:752px;top:310px">
<rect x="786.900" y="332" width="17.500" height="6.100" fill="#050505"/>
<circle cx="772.700" cy="333.700" r="8.800" fill="#868686" stroke="#141414" stroke-width="1.400"/>
<path transform="translate(.7 0)" d="M758.700 320.500Q765.500 313.600 772.500 314.000Q780.000 314.400 784.900 318.400L785.800 314.200L790.400 327.000L778.000 321.900L779.900 320.700Q776.000 318.100 771.500 318.200Q766.000 318.600 761.400 323.000Z" fill="#3a4ba8"/>
</svg>
<svg width="34" height="18" viewBox="0 0 34 18" style="left:680px;top:379px"><path d="M.8 1h31.600l-15.800 15.400z" fill="#050505"/></svg>
<svg width="34" height="18" viewBox="0 0 34 18" style="left:680px;top:524px"><path d="M.8 1h31.600l-15.800 15.400z" fill="#050505"/></svg>
<div class="grp" style="left:530px;top:414px;width:331px;height:98px"><i></i></div>
<div class="gl" style="left:536.3px;top:408px;width:75px;height:14px"></div>
<span class="t " style="left:538.30px;top:407.19px;font-size:11px;line-height:14px;color:#000;letter-spacing:-0.184px;">Writing Results</span>
<div class="btn " style="left:649px;top:430px;width:94px;height:70px"></div>
<span class="t " style="left:688.50px;top:441.79px;font-size:11px;line-height:14px;color:#000;letter-spacing:-0.373px;">Write</span>
<svg width="52" height="36" viewBox="672 458 52 36" style="left:672px;top:458px">
<defs><linearGradient id="wg" x1="674" y1="0" x2="690" y2="0" gradientUnits="userSpaceOnUse"><stop offset="0" stop-color="#b9c8f2"/><stop offset=".45" stop-color="#5a70cc"/><stop offset="1" stop-color="#3a4ba8"/></linearGradient></defs>
<path d="M674.200 470.900C676.500 463.200 687 459.300 695.200 464.200L699.400 460.100L705 477.500L687.500 472.400L691.600 468.400C686.600 465 679.800 465.600 675.300 471.500Z" fill="url(#wg)"/>
<rect x="685.400" y="481" width="7.500" height="5" fill="#fff" stroke="#000" stroke-width="1.200"/>
<rect x="692.400" y="479.200" width="2.600" height="8.600" fill="#000"/>
<rect x="695" y="477.600" width="14.500" height="12.800" fill="#6b6350" stroke="#000" stroke-width="1.200"/>
<rect x="709.500" y="464.300" width="11.400" height="26.100" rx="1" fill="#eaf6fb" stroke="#000" stroke-width="1.200"/>
<path d="M710 471.200h10.400" stroke="#6b5a3c" stroke-width="1"/>
<rect x="714.800" y="475.800" width="2.200" height="10.700" fill="#6b5a3c"/>
</svg>
<svg width="150" height="112" viewBox="623 406 150 112" style="left:623px;top:406px"><ellipse cx="697.900" cy="462.300" rx="70.400" ry="51.200" fill="none" stroke="#e8913c" stroke-width="3"/></svg>
<div class="grp" style="left:532px;top:560px;width:331px;height:71px"><i></i></div>
<div class="gl" style="left:538.3px;top:554px;width:41.2px;height:14px"></div>
<span class="t " style="left:540.30px;top:553.19px;font-size:11px;line-height:14px;color:#000;letter-spacing:-0.187px;">Confirm</span>
<div class="btn " style="left:568px;top:577px;width:97px;height:37px"></div>
<span class="t " style="left:607.40px;top:589.79px;font-size:11px;line-height:14px;color:#6d6d6d;letter-spacing:-0.387px;">Reset</span>
<div class="btn " style="left:727px;top:577px;width:98px;height:37px"></div>
<span class="t " style="left:755.50px;top:589.79px;font-size:11px;line-height:14px;color:#6d6d6d;letter-spacing:-0.489px;">Completed</span>
<div class="grp" style="left:18px;top:642px;width:845px;height:72px"><i></i></div>
<div class="gl" style="left:25px;top:636px;width:98.5px;height:14px"></div>
<span class="t " style="left:27.00px;top:635.19px;font-size:11px;line-height:14px;color:#000;letter-spacing:-0.240px;">Encoder Information</span>
<span class="t " style="left:30.30px;top:652.19px;font-size:11px;line-height:14px;color:#000;letter-spacing:-0.096px;">Target</span>
<span class="t " style="left:96.30px;top:652.19px;font-size:11px;line-height:14px;color:#000;letter-spacing:-0.196px;">Motor Encoder</span>
<span class="t " style="left:30.30px;top:677.19px;font-size:11px;line-height:14px;color:#000;letter-spacing:-0.268px;">Resolution</span>
<span class="t " style="left:96.30px;top:677.19px;font-size:11px;line-height:14px;color:#000;letter-spacing:-0.185px;">16777216[Pulse/rev]</span>
</body></html>
